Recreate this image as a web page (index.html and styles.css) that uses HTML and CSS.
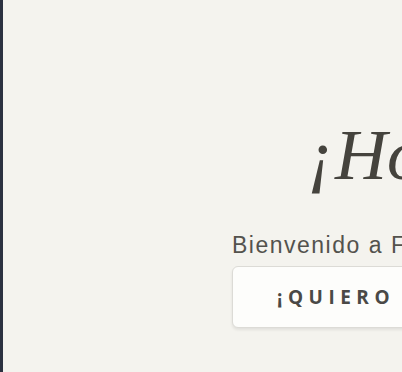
FILE: index.html
```html
<!DOCTYPE html>
<html lang="es">
<head>
    <meta charset="UTF-8">
    <meta name="viewport" content="width=device-width, initial-scale=1.0">
    <title>Bienvenido</title>
    <link rel="stylesheet" href="styles.css">
</head>
<body>

    <div class="layout">
        <aside class="sidebar"></aside>
        <main class="hero">
            <h1 class="hero-title">¡Hola de nuevo!</h1>
            <p class="hero-subtitle">Bienvenido a Finanzas Personales</p>
            <div class="hero-actions">
                <button type="button" class="hero-button">¡Quiero comenzar!</button>
            </div>
        </main>
    </div>

</body>
</html>
```

FILE: styles.css
```css
html, body {
    margin: 0;
    padding: 0;
    height: 100%;
    overflow: hidden;
}
body {
    font-family: 'Liberation Sans', Arial, sans-serif;
    background-color: #f4f3ee;
}
.layout {
    display: flex;
    height: 100%;
}
.sidebar {
    flex: 0 0 3px;
    background-color: #2b3140;
}
.hero {
    flex: 1;
    min-width: 0;
    padding: 115px 0 0 229px;
    white-space: nowrap;
}
.hero-title {
    margin: 0 0 37px 75px;
    font-family: 'Liberation Serif', 'Times New Roman', serif;
    font-style: italic;
    font-weight: normal;
    font-size: 72px;
    line-height: 80px;
    color: #45433d;
}
.hero-subtitle {
    margin: 0 0 8px 0;
    font-size: 23px;
    line-height: 26px;
    letter-spacing: 1.5px;
    color: #53524d;
}
.hero-actions {
    display: flex;
}
.hero-button {
    padding: 18px 44px;
    font-family: 'Open Sans', 'Liberation Sans', Arial, sans-serif;
    font-size: 19px;
    font-weight: 700;
    line-height: 24px;
    letter-spacing: 5.5px;
    text-transform: uppercase;
    color: #4a4946;
    background-color: #fdfdfb;
    border: 1px solid #dcdbd6;
    border-radius: 6px;
    box-shadow: 0 2px 3px rgba(0, 0, 0, 0.08);
    cursor: pointer;
    white-space: nowrap;
}
```
